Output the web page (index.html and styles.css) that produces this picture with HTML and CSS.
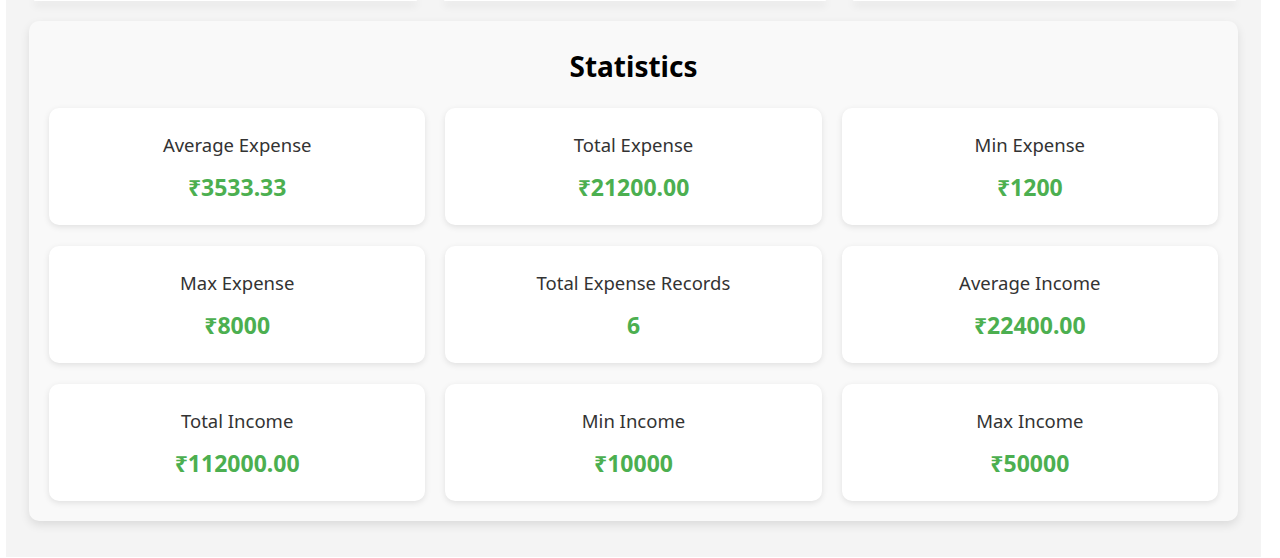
FILE: index.html
```html
<!DOCTYPE html>
<html lang="en">
<head>
<meta charset="utf-8">
<title>Statistics</title>
<link rel="stylesheet" href="styles.css">
</head>
<body>
<div class="page">
  <div class="top-row">
    <div class="top-card"></div>
    <div class="top-card"></div>
    <div class="top-card"></div>
  </div>
  <section class="stats">
    <h2 class="stats-title">Statistics</h2>
    <div class="stats-grid">
      <div class="stat-card"><h3 class="stat-label">Average Expense</h3><p class="stat-value">₹3533.33</p></div>
      <div class="stat-card"><h3 class="stat-label">Total Expense</h3><p class="stat-value">₹21200.00</p></div>
      <div class="stat-card"><h3 class="stat-label">Min Expense</h3><p class="stat-value">₹1200</p></div>
      <div class="stat-card"><h3 class="stat-label">Max Expense</h3><p class="stat-value">₹8000</p></div>
      <div class="stat-card"><h3 class="stat-label">Total Expense Records</h3><p class="stat-value">6</p></div>
      <div class="stat-card"><h3 class="stat-label">Average Income</h3><p class="stat-value">₹22400.00</p></div>
      <div class="stat-card"><h3 class="stat-label">Total Income</h3><p class="stat-value">₹112000.00</p></div>
      <div class="stat-card"><h3 class="stat-label">Min Income</h3><p class="stat-value">₹10000</p></div>
      <div class="stat-card"><h3 class="stat-label">Max Income</h3><p class="stat-value">₹50000</p></div>
    </div>
  </section>
</div>
</body>
</html>
```
FILE: styles.css
```css
html, body {
  margin: 0;
  padding: 0;
  background: #ffffff;
}
body {
  font-family: "Noto Sans", "Open Sans", "DejaVu Sans", sans-serif;
  color: #333333;
}
.page {
  margin-left: 6px;
  width: 1255px;
  height: 557px;
  box-sizing: border-box;
  background: #f4f4f4;
  padding: 0 23px;
  overflow: hidden;
}
.top-row {
  display: grid;
  grid-template-columns: repeat(3, 1fr);
  gap: 27px;
  padding: 0 2px 0 5px;
  height: 1px;
}
.top-card {
  height: 1px;
  background: #ffffff;
  border-radius: 0 0 10px 10px;
  box-shadow: 0 3px 9px rgba(0, 0, 0, 0.32);
}
.stats {
  margin-top: 20px;
  background: #f9f9f9;
  border-radius: 10px;
  padding: 20px;
  box-shadow: 0 4px 10px rgba(0, 0, 0, 0.1);
}
.stats-title {
  margin: 8px 0 24.5px;
  font-size: 28px;
  line-height: 34px;
  font-weight: 700;
  text-align: center;
  color: #000000;
}
.stats-grid {
  display: grid;
  grid-template-columns: repeat(3, 1fr);
  column-gap: 20px;
  row-gap: 20.5px;
}
.stat-card {
  height: 117.5px;
  box-sizing: border-box;
  background: #ffffff;
  border-radius: 10px;
  padding: 25.5px 20px 0;
  text-align: center;
  box-shadow: 0 2px 6px rgba(0, 0, 0, 0.1);
}
.stat-label {
  margin: 0 0 15px;
  font-size: 18.5px;
  line-height: 24px;
  font-weight: 400;
  color: #333333;
}
.stat-value {
  margin: 0;
  font-size: 23px;
  line-height: 30px;
  font-weight: 700;
  color: #4caf50;
}
```
